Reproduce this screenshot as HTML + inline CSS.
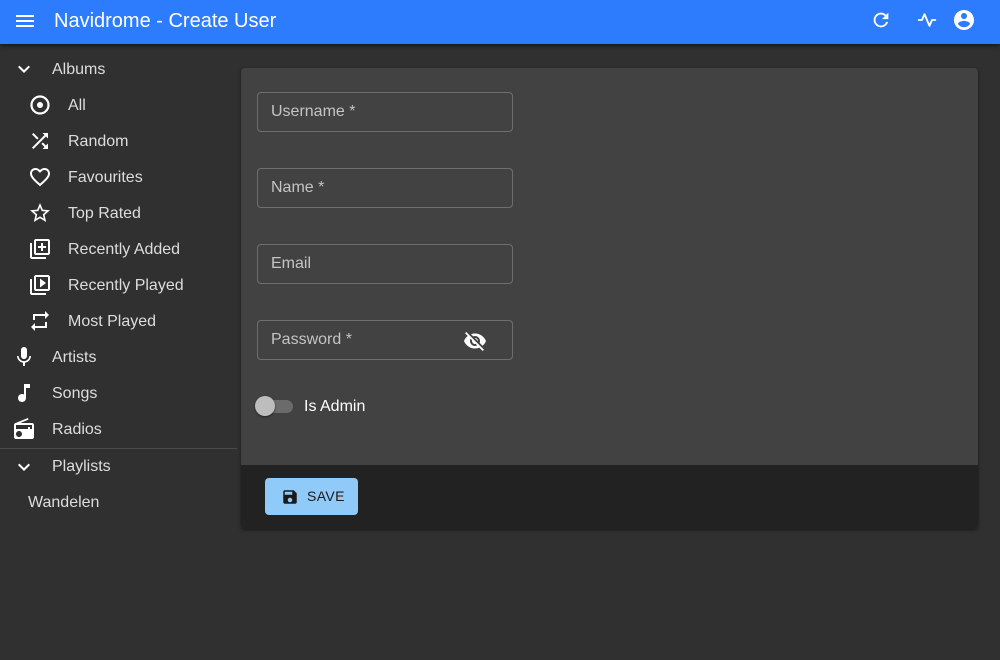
<!DOCTYPE html>
<html><head><meta charset="utf-8"><style>
*{box-sizing:border-box;margin:0;padding:0}
body{width:1000px;height:660px;background:#303030;font-family:"Liberation Sans",Roboto,sans-serif;color:#fff;position:relative;overflow:hidden}
.bar{position:absolute;left:0;top:0;width:1000px;height:44px;background:#2d7cfd;box-shadow:0 2px 4px rgba(0,0,0,.5)}
.bar .t{position:absolute;left:54px;top:10px;font-size:20px;font-weight:500}
svg{position:absolute;fill:currentColor}
.it{position:absolute;font-size:16px;color:#ddd}
.card{position:absolute;left:241px;top:68px;width:737px;height:461px;background:#424242;border-radius:4px;overflow:hidden;box-shadow:0 1px 3px rgba(0,0,0,.5)}
.tb{position:absolute;left:0;top:397px;width:737px;height:64px;background:#222}
.inp{position:absolute;left:16px;width:256px;height:40px;border:1px solid #6e6e6e;border-radius:4px}
.inp span{position:absolute;left:13px;top:10px;font-size:16px;color:#c4c4c4}
.btn{position:absolute;left:24px;top:410px;width:93px;height:37px;background:#90caf9;border-radius:4px;color:#1a1a1a;font-size:14px}
</style></head><body>
<div class="bar">
<svg style="left:13px;top:9px" width="24" height="24" viewBox="0 0 24 24"><path d="M3 18h18v-2H3v2zm0-5h18v-2H3v2zm0-7v2h18V6H3z"/></svg>
<div class="t">Navidrome - Create User</div>
<svg style="left:870px;top:9px" width="22" height="22" viewBox="0 0 24 24"><path d="M17.65 6.35C16.2 4.9 14.21 4 12 4c-4.420 0-7.99 3.58-7.99 8s3.57 8 7.99 8c3.73 0 6.84-2.55 7.73-6h-2.08c-.82 2.33-3.04 4-5.65 4-3.31 0-6-2.69-6-6s2.69-6 6-6c1.66 0 3.14.69 4.22 1.78L13 11h7V4l-2.35 2.35z"/></svg>
<svg style="left:917px;top:10px" width="20" height="20" viewBox="0 0 24 24"><polyline points="22 12 18 12 15 19 9 5 6 12 2 12" fill="none" stroke="#fff" stroke-width="2.2" stroke-linejoin="round" stroke-linecap="round"/></svg>
<svg style="left:952px;top:8px" width="24" height="24" viewBox="0 0 24 24"><path d="M12 2C6.48 2 2 6.48 2 12s4.48 10 10 10 10-4.48 10-10S17.52 2 12 2zm0 3c1.66 0 3 1.34 3 3s-1.34 3-3 3-3-1.34-3-3 1.34-3 3-3zm0 14.2c-2.5 0-4.71-1.28-6-3.22.03-1.99 4-3.08 6-3.08 1.99 0 5.97 1.09 6 3.08-1.29 1.94-3.5 3.22-6 3.22z"/></svg>
</div>

<svg style="left:12px;top:57px" width="24" height="24" viewBox="0 0 24 24"><path d="M16.59 8.59L12 13.17 7.41 8.59 6 10l6 6 6-6z"/></svg>
<div class="it" style="left:52px;top:61px">Albums</div>
<svg style="left:28px;top:93px" width="24" height="24" viewBox="0 0 24 24"><circle cx="12" cy="12" r="8.5" fill="none" stroke="#fff" stroke-width="2.2"/><circle cx="12" cy="12" r="3"/></svg>
<div class="it" style="left:68px;top:97px">All</div>
<svg style="left:28px;top:129px" width="24" height="24" viewBox="0 0 24 24"><path d="M10.59 9.17L5.41 4 4 5.41l5.17 5.17 1.42-1.41zM14.5 4l2.04 2.04L4 18.59 5.41 20 17.96 7.46 20 9.5V4h-5.5zm.33 9.41l-1.41 1.41 3.13 3.13L14.5 20H20v-5.5l-2.04 2.04-3.13-3.13z"/></svg>
<div class="it" style="left:68px;top:133px">Random</div>
<svg style="left:28px;top:165px" width="24" height="24" viewBox="0 0 24 24"><path d="M16.5 3c-1.74 0-3.41.81-4.5 2.09C10.91 3.81 9.24 3 7.5 3 4.42 3 2 5.42 2 8.5c0 3.78 3.4 6.86 8.55 11.54L12 21.35l1.45-1.32C18.6 15.36 22 12.28 22 8.5 22 5.42 19.58 3 16.5 3zm-4.4 15.55l-.1.1-.1-.1C7.14 14.24 4 11.39 4 8.5 4 6.5 5.5 5 7.5 5c1.54 0 3.04.99 3.57 2.36h1.87C13.46 5.99 14.96 5 16.5 5c2 0 3.5 1.5 3.5 3.5 0 2.89-3.14 5.74-7.9 10.05z"/></svg>
<div class="it" style="left:68px;top:169px">Favourites</div>
<svg style="left:28px;top:201px" width="24" height="24" viewBox="0 0 24 24"><path d="M22 9.24l-7.19-.62L12 2 9.19 8.63 2 9.24l5.46 4.73L5.82 21 12 17.27 18.18 21l-1.63-7.03L22 9.24zM12 15.4l-3.76 2.27 1-4.28-3.32-2.88 4.38-.38L12 6.1l1.71 4.04 4.38.38-3.32 2.88 1 4.28L12 15.4z"/></svg>
<div class="it" style="left:68px;top:205px">Top Rated</div>
<svg style="left:28px;top:237px" width="24" height="24" viewBox="0 0 24 24"><path d="M4 6H2v14c0 1.1.9 2 2 2h14v-2H4V6zm16-4H8c-1.1 0-2 .9-2 2v12c0 1.1.9 2 2 2h12c1.1 0 2-.9 2-2V4c0-1.1-.9-2-2-2zm0 14H8V4h12v12zm-7-2h2v-3h3V9h-3V6h-2v3h-3v2h3z"/></svg>
<div class="it" style="left:68px;top:241px">Recently Added</div>
<svg style="left:28px;top:273px" width="24" height="24" viewBox="0 0 24 24"><path d="M4 6H2v14c0 1.1.9 2 2 2h14v-2H4V6zm16-4H8c-1.1 0-2 .9-2 2v12c0 1.1.9 2 2 2h12c1.1 0 2-.9 2-2V4c0-1.1-.9-2-2-2zm0 14H8V4h12v12zM12 5.5v9l6-4.5z"/></svg>
<div class="it" style="left:68px;top:277px">Recently Played</div>
<svg style="left:28px;top:309px" width="24" height="24" viewBox="0 0 24 24"><path d="M7 7h10v3l4-4-4-4v3H5v6h2V7zm10 10H7v-3l-4 4 4 4v-3h12v-6h-2v4z"/></svg>
<div class="it" style="left:68px;top:313px">Most Played</div>
<svg style="left:12px;top:345px" width="24" height="24" viewBox="0 0 24 24"><path d="M12 14c1.66 0 2.99-1.34 2.99-3L15 5c0-1.66-1.34-3-3-3S9 3.34 9 5v6c0 1.66 1.34 3 3 3zm5.3-3c0 3-2.54 5.1-5.3 5.1S6.7 14 6.7 11H5c0 3.41 2.72 6.23 6 6.72V21h2v-3.28c3.28-.48 6-3.3 6-6.72h-1.7z"/></svg>
<div class="it" style="left:52px;top:349px">Artists</div>
<svg style="left:12px;top:381px" width="24" height="24" viewBox="0 0 24 24"><path d="M12 3v10.55c-.59-.34-1.27-.55-2-.55-2.21 0-4 1.79-4 4s1.79 4 4 4 4-1.79 4-4V7h4V3h-6z"/></svg>
<div class="it" style="left:52px;top:385px">Songs</div>
<svg style="left:12px;top:417px" width="24" height="24" viewBox="0 0 24 24"><path d="M3.24 6.15C2.51 6.43 2 7.17 2 8v12c0 1.1.89 2 2 2h16c1.11 0 2-.9 2-2V8c0-1.11-.89-2-2-2H8.3l8.26-3.34L15.88 1 3.24 6.15zM7 20c-1.66 0-3-1.34-3-3s1.34-3 3-3 3 1.34 3 3-1.34 3-3 3zm13-8h-2v-2h-2v2H4V8h16v4z"/></svg>
<div class="it" style="left:52px;top:421px">Radios</div>
<div style="position:absolute;left:0;top:448px;width:237px;height:1px;background:#4a4a4a"></div>
<svg style="left:12px;top:455px" width="24" height="24" viewBox="0 0 24 24"><path d="M16.59 8.59L12 13.17 7.41 8.59 6 10l6 6 6-6z"/></svg>
<div class="it" style="left:52px;top:458px">Playlists</div>
<div class="it" style="left:28px;top:494px">Wandelen</div>

<div class="card">
<div class="inp" style="top:24px"><span>Username *</span></div>
<div class="inp" style="top:100px"><span>Name *</span></div>
<div class="inp" style="top:176px"><span>Email</span></div>
<div class="inp" style="top:252px"><span>Password *</span>
<svg style="left:205px;top:8px;color:#fff" width="24" height="24" viewBox="0 0 24 24"><path d="M12 7c2.76 0 5 2.24 5 5 0 .65-.13 1.26-.36 1.83l2.92 2.92c1.51-1.26 2.7-2.89 3.43-4.75-1.73-4.39-6-7.5-11-7.5-1.4 0-2.74.25-3.98.7l2.16 2.16C10.74 7.13 11.35 7 12 7zM2 4.27l2.28 2.28.46.46C3.08 8.3 1.78 10.02 1 12c1.73 4.39 6 7.5 11 7.5 1.55 0 3.03-.3 4.38-.84l.42.42L19.73 22 21 20.73 3.27 3 2 4.27zM7.53 9.8l1.55 1.55c-.05.21-.08.43-.08.65 0 1.66 1.34 3 3 3 .22 0 .44-.03.65-.08l1.55 1.55c-.67.33-1.41.53-2.2.53-2.76 0-5-2.24-5-5 0-.79.2-1.53.53-2.2zm4.31-.78l3.15 3.15.02-.16c0-1.66-1.34-3-3-3l-.17.01z"/></svg></div>
<div style="position:absolute;left:19px;top:332px;width:33px;height:13px;border-radius:7px;background:#6b6b6b"></div>
<div style="position:absolute;left:14px;top:328px;width:20px;height:20px;border-radius:50%;background:#bdbdbd;box-shadow:0 1px 2px rgba(0,0,0,.5)"></div>
<div style="position:absolute;left:63px;top:330px;font-size:16px;color:#fff">Is Admin</div>
<div class="tb"></div>
<div class="btn">
<svg style="left:16px;top:10px;color:#1a1a1a" width="18" height="18" viewBox="0 0 24 24"><path d="M17 3H5c-1.11 0-2 .9-2 2v14c0 1.1.89 2 2 2h14c1.1 0 2-.89 2-2V7l-4-4zm-5 16c-1.66 0-3-1.34-3-3s1.34-3 3-3 3 1.34 3 3-1.34 3-3 3zm3-10H5V5h10v4z"/></svg>
<span style="position:absolute;left:42px;top:10px;letter-spacing:.4px">SAVE</span></div>
</div>
</body></html>
